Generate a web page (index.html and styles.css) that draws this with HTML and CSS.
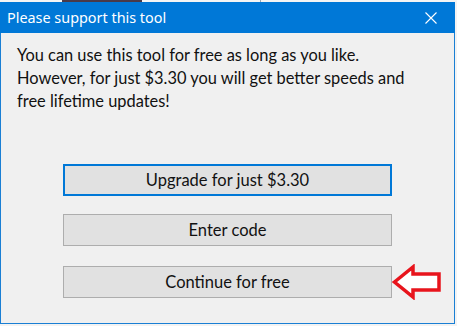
FILE: index.html
```html
<!DOCTYPE html>
<html lang="en">
<head>
    <meta charset="UTF-8">
    <meta name="viewport" content="width=device-width, initial-scale=1.0">
    <title>Please support this tool</title>
    <link rel="stylesheet" href="styles.css">
</head>
<body>
    <div class="desktop-strip"><span class="thumb"></span><span class="edge"></span></div>
    <div class="dialog">
        <div class="titlebar">
            <span class="title">Please support this tool</span>
            <svg class="close" width="12" height="12" viewBox="0 0 12 12">
                <path d="M0.5 0.5 L11.5 11.5 M11.5 0.5 L0.5 11.5" stroke="#fff" stroke-width="1.1" fill="none"/>
            </svg>
        </div>
        <div class="content">
            <p class="message">You can use this tool for free as long as you like.<br>However, for just $3.30 you will get better speeds and<br>free lifetime updates!</p>
            <div class="buttons">
                <button class="btn primary">Upgrade for just $3.30</button>
                <button class="btn">Enter code</button>
                <div class="row">
                    <button class="btn">Continue for free</button>
                    <svg class="arrow" width="52" height="36" viewBox="0 0 52 36">
                        <path d="M2.5 18 L21 3 L21 10 L47 10 L47 26 L21 26 L21 33 Z" fill="#fff" stroke="#e8141c" stroke-width="3.5" stroke-linejoin="miter"/>
                    </svg>
                </div>
            </div>
        </div>
    </div>
</body>
</html>
```

FILE: styles.css
```css
* { box-sizing: border-box; margin: 0; padding: 0; }
body {
    width: 457px;
    height: 326px;
    background: #f3f3f3;
    overflow: hidden;
}
.desktop-strip {
    height: 2px;
    display: flex;
    background: #f4f4f4;
}
.desktop-strip .thumb { width: 80px; margin-left: 62px; background: #4a3a48; }
.desktop-strip .edge { width: 1px; margin-left: 118px; background: #9aa6b4; }
.dialog {
    width: 455px;
    height: 322px;
    border: 1px solid #1a7fd4;
    border-top: none;
    background: #f0f0f0;
    display: flex;
    flex-direction: column;
}
.titlebar {
    height: 31px;
    margin: 0 -1px;
    background: #0078d7;
    color: #fff;
    display: flex;
    align-items: center;
    justify-content: space-between;
    padding: 0 18px 0 7px;
}
.title {
    font-family: "Noto Sans", sans-serif;
    font-size: 14.4px;
}
.content {
    flex: 1;
    padding: 10px 16px 0 16px;
}
.message {
    font-family: Lato, sans-serif;
    font-size: 16.4px;
    line-height: 23px;
    color: #111;
}
.buttons {
    display: flex;
    flex-direction: column;
    gap: 18px;
    margin-top: 52px;
    padding-left: 46px;
}
.btn {
    width: 329px;
    height: 32px;
    flex-shrink: 0;
    background: #e1e1e1;
    border: 1px solid #adadad;
    font-family: Lato, sans-serif;
    font-size: 16.5px;
    color: #111;
}
.btn.primary {
    border: 2px solid #0078d7;
}
.row {
    display: flex;
    align-items: center;
}
.arrow { flex-shrink: 0; }
```
